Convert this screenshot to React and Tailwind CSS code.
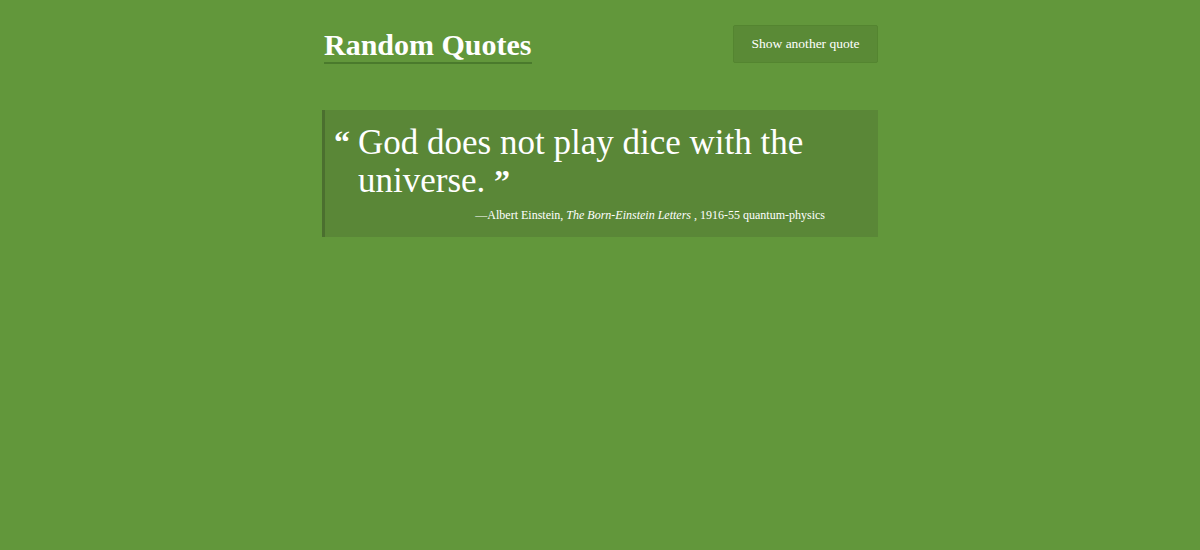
export default function App() {
  return (
    <div className="min-h-[550px] w-full bg-[#62973b] text-white" style={{ fontFamily: '"Liberation Serif", "DejaVu Serif", serif' }}>
      <div className="mx-auto w-[556px] pt-[25px]">
        <div className="flex items-start justify-between">
          <h1 className="mt-[4px] ml-[2px] border-b-2 border-[#4a7a2c] pb-[2px] text-[30px] font-bold leading-[31px]">Random Quotes</h1>
          <button className="h-[38px] w-[145px] rounded-[2px] border border-[#548530] bg-[#5a8a36] text-[13.5px] text-white">Show another quote</button>
        </div>
        <div className="mt-[46px] h-[127px] border-l-[3px] border-[#4b6f2f] bg-[#5a8737] pl-[9px] pt-[14px]">
          <div className="flex">
            <span className="mt-[3px] w-[24px] text-[32px] font-bold leading-[30px]">“</span>
            <p className="w-[480px] text-[35px] leading-[38px]">
              God does not play dice with the universe. <b className="text-[32px]">”</b>
            </p>
          </div>
          <div className="mt-[8px] w-[491px] text-right text-[12px] leading-[14px]">
            —Albert Einstein, <i>The Born-Einstein Letters</i> , 1916-55 quantum-physics
          </div>
        </div>
      </div>
    </div>
  );
}
